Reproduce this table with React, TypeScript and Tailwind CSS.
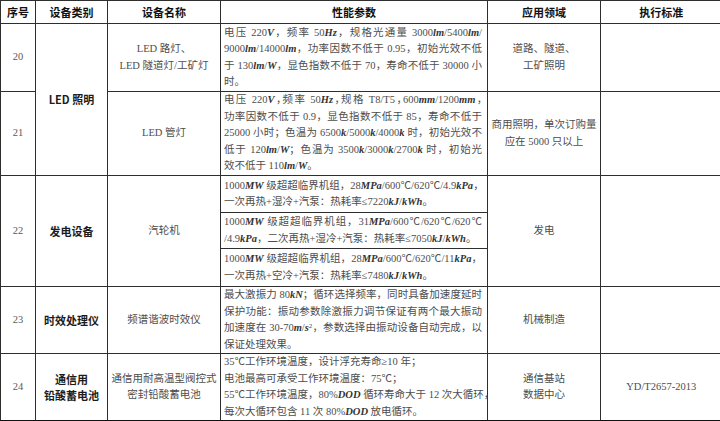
import type { ReactNode } from "react";

// unit text: bold italic, like the printed standard
const U = ({ children }: { children: ReactNode }) => (
  <b className="font-bold italic text-[#333]">{children}</b>
);

// a full line, stretched to the cell width
const J = ({ children, tight }: { children: ReactNode; tight?: boolean }) => (
  <div
    className={`h-[16.5px] whitespace-nowrap text-justify [text-align-last:justify] ${
      tight ? "[font-feature-settings:'halt']" : ""
    }`}
  >
    {children}
  </div>
);

// a last / short line, left aligned
const L = ({ children }: { children: ReactNode }) => (
  <div className="h-[16.5px] whitespace-nowrap">{children}</div>
);

const cell = "border border-[#2e2e2e] p-0 align-middle";
const center = `${cell} text-center text-[10.5px]`;
const num = `${cell} text-center text-[10.5px] text-[#5a5a5a]`;
const spec = `${cell} pl-[3px] pr-[5px] text-left text-[10.5px]`;
const cat = `${cell} text-center font-['Noto_Sans_CJK_SC',sans-serif] font-bold text-[11px] text-[#1c1c1c]`;
const last = "border-b-2 border-b-[#111]";

const headers = ["序号", "设备类别", "设备名称", "性能参数", "应用领域", "执行标准"];

export default function App() {
  return (
    <div className="w-[720px] h-[421px] overflow-hidden bg-white">
      <table className="w-[721px] table-fixed border-collapse font-['Liberation_Serif','Noto_Sans_CJK_SC',serif] text-[11px] leading-[16.5px] text-[#4d4d4d]">
        <colgroup>
          <col className="w-[35px]" />
          <col className="w-[72px]" />
          <col className="w-[113px]" />
          <col className="w-[267px]" />
          <col className="w-[113px]" />
          <col className="w-[121px]" />
        </colgroup>
        <thead>
          <tr className="h-[23px]">
            {headers.map((h) => (
              <th
                key={h}
                className={`${cell} text-center font-['Noto_Sans_CJK_SC',sans-serif] font-bold text-[11px] text-[#111] ${
                  h === "执行标准" ? "border-r-0" : ""
                }`}
              >
                {h}
              </th>
            ))}
          </tr>
        </thead>
        <tbody>
          {/* 20 */}
          <tr className="h-[68px]">
            <td className={num}>20</td>
            <td className={cat} rowSpan={2}>
              LED 照明
            </td>
            <td className={center}>
              <div>LED 路灯、</div>
              <div>LED 隧道灯/工矿灯</div>
            </td>
            <td className={spec}>
              <J>
                电压 220<U>V</U>，频率 50<U>Hz</U>，规格光通量 3000<U>lm</U>/5400<U>lm</U>/
              </J>
              <J>
                9000<U>lm</U>/14000<U>lm</U>，功率因数不低于 0.95，初始光效不低
              </J>
              <J>
                于 130<U>lm</U>/<U>W</U>，显色指数不低于 70，寿命不低于 30000 小
              </J>
              <L>时。</L>
            </td>
            <td className={center}>
              <div>道路、隧道、</div>
              <div>工矿照明</div>
            </td>
            <td className={`${center} border-r-0`}></td>
          </tr>

          {/* 21 */}
          <tr className="h-[84px]">
            <td className={num}>21</td>
            <td className={center}>LED 管灯</td>
            <td className={spec}>
              <J tight>
                电压 220<U>V</U>，频率 50<U>Hz</U>，规格 T8/T5，600<U>mm</U>/1200<U>mm</U>，
              </J>
              <J>功率因数不低于 0.9，显色指数不低于 85，寿命不低于</J>
              <J>
                25000 小时；色温为 6500<U>k</U>/5000<U>k</U>/4000<U>k</U> 时，初始光效不
              </J>
              <J>
                低于 120<U>lm</U>/<U>W</U>；色温为 3500<U>k</U>/3000<U>k</U>/2700<U>k</U> 时，初始光
              </J>
              <L>
                效不低于 110<U>lm</U>/<U>W</U>。
              </L>
            </td>
            <td className={center}>
              <div>商用照明，单次订购量</div>
              <div>应在 5000 只以上</div>
            </td>
            <td className={`${center} border-r-0`}></td>
          </tr>

          {/* 22 */}
          <tr className="h-[37px]">
            <td className={num} rowSpan={3}>
              22
            </td>
            <td className={cat} rowSpan={3}>
              发电设备
            </td>
            <td className={center} rowSpan={3}>
              汽轮机
            </td>
            <td className={spec}>
              <J>
                1000<U>MW</U> 级超超临界机组，28<U>MPa</U>/600℃/620℃/4.9<U>kPa</U>，
              </J>
              <L>
                一次再热+湿冷+汽泵：热耗率≤7220<U>kJ</U>/<U>kWh</U>。
              </L>
            </td>
            <td className={center} rowSpan={3}>
              发电
            </td>
            <td className={`${center} border-r-0`} rowSpan={3}></td>
          </tr>
          <tr className="h-[36px]">
            <td className={spec}>
              <J>
                1000<U>MW</U> 级超超临界机组，31<U>MPa</U>/600℃/620℃/620℃
              </J>
              <L>
                /4.9<U>kPa</U>，二次再热+湿冷+汽泵：热耗率≤7050<U>kJ</U>/<U>kWh</U>。
              </L>
            </td>
          </tr>
          <tr className="h-[38px]">
            <td className={spec}>
              <J>
                1000<U>MW</U> 级超超临界机组，28<U>MPa</U>/600℃/620℃/11<U>kPa</U>，
              </J>
              <L>
                一次再热+空冷+汽泵：热耗率≤7480<U>kJ</U>/<U>kWh</U>。
              </L>
            </td>
          </tr>

          {/* 23 */}
          <tr className="h-[67px]">
            <td className={num}>23</td>
            <td className={cat}>时效处理仪</td>
            <td className={center}>频谱谐波时效仪</td>
            <td className={spec}>
              <J>
                最大激振力 80<U>kN</U>；循环选择频率，同时具备加速度延时
              </J>
              <J>保护功能：振动参数除激振力调节保证有两个最大振动</J>
              <J>
                加速度在 30-70<U>m</U>/<U>s</U>
                <sup className="text-[7px]">2</sup>，参数选择由振动设备自动完成，以
              </J>
              <L>保证处理效果。</L>
            </td>
            <td className={center}>机械制造</td>
            <td className={`${center} border-r-0`}></td>
          </tr>

          {/* 24 */}
          <tr className="h-[67px]">
            <td className={`${num} ${last}`}>24</td>
            <td className={`${cat} ${last}`}>
              <div>通信用</div>
              <div>铅酸蓄电池</div>
            </td>
            <td className={`${center} ${last}`}>
              <div>通信用耐高温型阀控式</div>
              <div>密封铅酸蓄电池</div>
            </td>
            <td className={`${spec} ${last}`}>
              <L>35℃工作环境温度，设计浮充寿命≥10 年；</L>
              <L>电池最高可承受工作环境温度：75℃；</L>
              <J>
                55℃工作环境温度，80%<U>DOD</U> 循环寿命大于 12 次大循环，
              </J>
              <L>
                每次大循环包含 11 次 80%<U>DOD</U> 放电循环。
              </L>
            </td>
            <td className={`${center} ${last}`}>
              <div>通信基站</div>
              <div>数据中心</div>
            </td>
            <td className={`${center} border-r-0 ${last}`}>YD/T2657-2013</td>
          </tr>
        </tbody>
      </table>
    </div>
  );
}
